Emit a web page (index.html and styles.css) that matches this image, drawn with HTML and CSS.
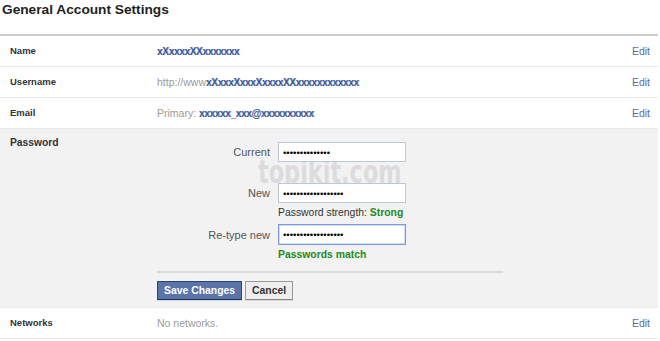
FILE: index.html
```html
<!DOCTYPE html>
<html>
<head>
<meta charset="utf-8">
<link rel="stylesheet" href="styles.css">
</head>
<body>
<div class="page">
  <h1 class="title">General Account Settings</h1>
  <div class="table">
    <div class="row">
      <div class="label">Name</div>
      <div class="value"><span class="blur">xXxxxxXXxxxxxxx</span></div>
      <a class="edit">Edit</a>
    </div>
    <div class="row">
      <div class="label">Username</div>
      <div class="value"><span class="muted">http://www</span><span class="blur">xXxxxXxxxXxxxxXXxxxxxxxxxxxx</span></div>
      <a class="edit">Edit</a>
    </div>
    <div class="row">
      <div class="label">Email</div>
      <div class="value"><span class="muted">Primary: </span><span class="blur">xxxxxx_xxx@xxxxxxxxxx</span></div>
      <a class="edit">Edit</a>
    </div>
    <div class="section">
      <div class="label label-big">Password</div>
      <div class="watermark">topikit.com</div>
      <div class="form">
        <div class="field first">
          <label class="flabel">Current</label>
          <input class="input" type="password" value="aaaaaaaaaaaaaa">
        </div>
        <div class="field second">
          <label class="flabel">New</label>
          <input class="input" type="password" value="aaaaaaaaaaaaaaaaaa">
        </div>
        <div class="hint">Password strength: <b class="ok">Strong</b></div>
        <div class="field third">
          <label class="flabel">Re-type new</label>
          <input class="input focus" type="password" value="aaaaaaaaaaaaaaaaaa">
        </div>
        <div class="hint ok">Passwords match</div>
        <div class="sep"></div>
        <div class="buttons">
          <button class="btn btn-primary">Save Changes</button>
          <button class="btn">Cancel</button>
        </div>
      </div>
    </div>
    <div class="row">
      <div class="label">Networks</div>
      <div class="value"><span class="muted">No networks.</span></div>
      <a class="edit">Edit</a>
    </div>
  </div>
</div>
</body>
</html>
```
FILE: styles.css
```css
* { box-sizing: border-box; }
html, body { margin: 0; padding: 0; background: #fff; }
body {
  font-family: "Liberation Sans", Arial, sans-serif;
  color: #333;
  width: 660px;
  height: 341px;
  overflow: hidden;
}
.page { width: 658px; }
.title {
  margin: 0;
  height: 34px;
  padding: 2px 0 0 2px;
  font-size: 13.7px;
  font-weight: bold;
  color: #222;
  line-height: 16px;
}
.table { border-top: 2px solid #cccccc; }
.row {
  display: flex;
  align-items: center;
  height: 31px;
  padding: 0 8px 1px 10px;
  border-bottom: 1px solid #e9e9e9;
}
.label {
  width: 147px;
  flex: none;
  font-size: 9.5px;
  font-weight: bold;
  color: #333;
}
.value {
  flex: 1;
  font-size: 10.5px;
  white-space: nowrap;
}
.muted { color: #9a9a9a; }
.blur {
  color: #3b5998;
  font-weight: bold;
  font-size: 10px;
  letter-spacing: -0.3px;
  text-shadow: 1px 0 0 rgba(59, 89, 152, 0.35);
}
.edit {
  font-size: 10.5px;
  color: #5d6a9e;
}
.section {
  position: relative;
  display: flex;
  align-items: flex-start;
  background: #f2f2f2;
  padding: 8px 0 7px 10px;
  border-bottom: 1px solid #e9e9e9;
}
.label-big {
  font-size: 10.3px;
  line-height: 12px;
}
.form {
  display: flex;
  flex-direction: column;
  position: relative;
}
.field {
  display: flex;
  align-items: center;
  height: 20px;
}
.field.first { margin-top: 5px; }
.field.second { margin-top: 21px; }
.field.third { margin-top: 5px; height: 21px; }
.flabel {
  width: 121px;
  padding-right: 8px;
  text-align: right;
  font-size: 11px;
  color: #555;
}
.input {
  width: 128px;
  height: 20px;
  margin: 0;
  padding: 0 4px;
  border: 1px solid #bdc7d8;
  background: #fff;
  font-family: "Liberation Sans", Arial, sans-serif;
  font-size: 9.6px;
  color: #000;
  outline: none;
}
.input.focus {
  height: 21px;
  border: 1px solid #7a9be0;
  box-shadow: inset 0 0 0 1px #cfdcf5;
}
.hint {
  margin: 4px 0 0 121px;
  font-size: 10.4px;
  line-height: 12px;
  color: #333;
}
.ok { color: #238a1c; font-weight: bold; }
.sep {
  margin-top: 10px;
  width: 346px;
  height: 2px;
  background: #d9d9d9;
}
.buttons {
  display: flex;
  gap: 3px;
  margin-top: 8px;
}
.btn {
  height: 19px;
  margin: 0;
  padding: 0 6px;
  font-family: "Liberation Sans", Arial, sans-serif;
  font-size: 10.4px;
  font-weight: bold;
  white-space: nowrap;
  color: #333;
  background: #eeeeee;
  border: 1px solid #999;
  border-bottom-color: #888;
  box-shadow: 0 1px 0 rgba(0, 0, 0, 0.1);
  line-height: 17px;
}
.btn-primary {
  color: #fff;
  background: #5b74a8;
  border-color: #29447e;
  border-bottom-color: #1a356e;
}
.watermark {
  position: absolute;
  left: 258px;
  top: 27px;
  font-family: "DejaVu Sans", sans-serif;
  font-size: 32px;
  line-height: 32px;
  font-weight: bold;
  color: #dcdcdc;
  transform: scaleX(0.7);
  transform-origin: left top;
  white-space: nowrap;
  pointer-events: none;
}
```
